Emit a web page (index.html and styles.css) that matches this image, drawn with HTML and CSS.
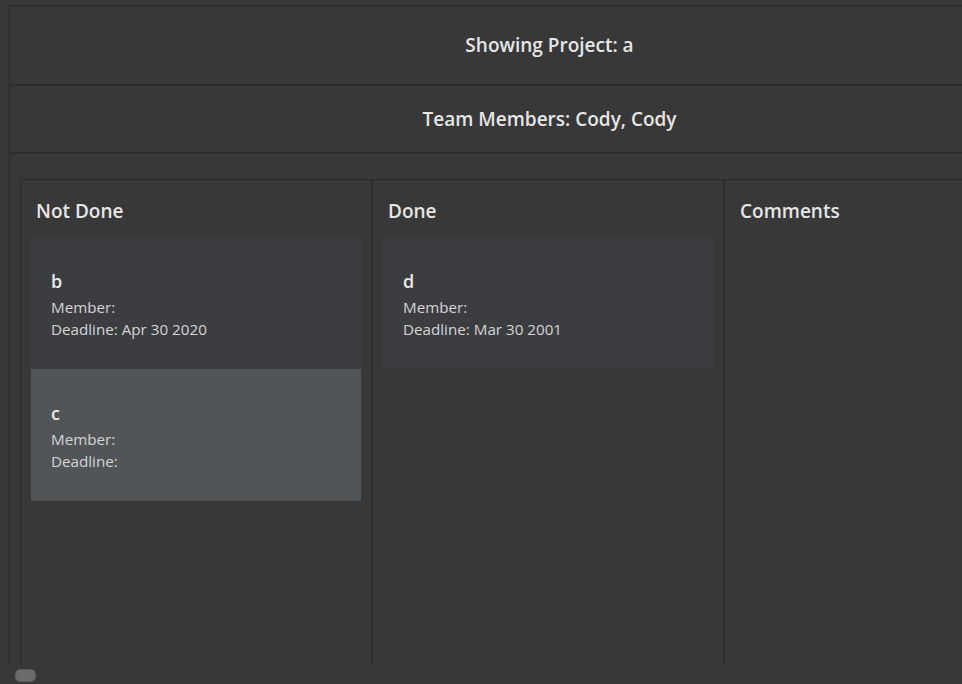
FILE: index.html
```html
<!DOCTYPE html>
<html>
<head>
<meta charset="utf-8">
<link rel="stylesheet" href="styles.css">
</head>
<body>
<div class="app">
  <div class="bar bar-project">Showing Project: a</div>
  <div class="bar bar-team">Team Members: Cody, Cody</div>
  <div class="board">
    <div class="column">
      <div class="col-title">Not Done</div>
      <div class="card">
        <div class="card-title">b</div>
        <div class="card-line">Member:</div>
        <div class="card-line">Deadline: Apr 30 2020</div>
      </div>
      <div class="card card-selected">
        <div class="card-title">c</div>
        <div class="card-line">Member:</div>
        <div class="card-line">Deadline:</div>
      </div>
    </div>
    <div class="column">
      <div class="col-title">Done</div>
      <div class="card">
        <div class="card-title">d</div>
        <div class="card-line">Member:</div>
        <div class="card-line">Deadline: Mar 30 2001</div>
      </div>
    </div>
    <div class="column">
      <div class="col-title">Comments</div>
    </div>
  </div>
</div>
<div class="scroll-thumb"></div>
</body>
</html>
```
FILE: styles.css
```css
html, body {
  margin: 0;
  padding: 0;
  background: #383838;
  overflow: hidden;
  width: 962px;
  height: 684px;
  font-family: "Open Sans", "Noto Sans", sans-serif;
}

.app {
  margin: 5px 0 0 9px;
  width: 1080px;
  height: 660px;
  border-left: 1px solid #2c2c2c;
  border-top: 1px solid #2c2c2c;
  box-sizing: border-box;
  overflow: hidden;
  display: flex;
  flex-direction: column;
}

.bar {
  display: flex;
  align-items: center;
  justify-content: center;
  color: #e6e6e6;
  font-size: 19px;
  font-weight: 600;
  border-bottom: 2px solid #2c2c2c;
  flex: none;
}

.bar-project {
  height: 78px;
}

.bar-team {
  height: 66px;
}

.board {
  flex: 1;
  display: flex;
  padding: 25px 0 0 10px;
}

.column {
  flex: none;
  border-left: 1px solid #2c2c2c;
  border-right: 1px solid #2c2c2c;
  border-top: 1px solid #2c2c2c;
  padding: 0 10px;
  width: 330px;
}

.col-title {
  color: #e6e6e6;
  font-size: 19px;
  font-weight: 600;
  line-height: 26px;
  padding: 18px 0 0 5px;
  margin-bottom: 13px;
}

.card {
  background: #3c3d40;
  padding: 32px 20px 29px;
  height: 71px;
}

.card-selected {
  background: #515558;
}

.card-title {
  color: #eaeaea;
  font-size: 18px;
  font-weight: 600;
  line-height: 24px;
  margin-bottom: 3px;
}

.card-line {
  color: #d4d4d4;
  font-size: 15.2px;
  line-height: 22px;
}

.scroll-thumb {
  position: fixed;
  left: 15px;
  top: 669px;
  width: 21px;
  height: 13px;
  border-radius: 5px;
  background: #6b6b6b;
  border: 1px solid #5a5a5a;
  box-sizing: border-box;
}
```
